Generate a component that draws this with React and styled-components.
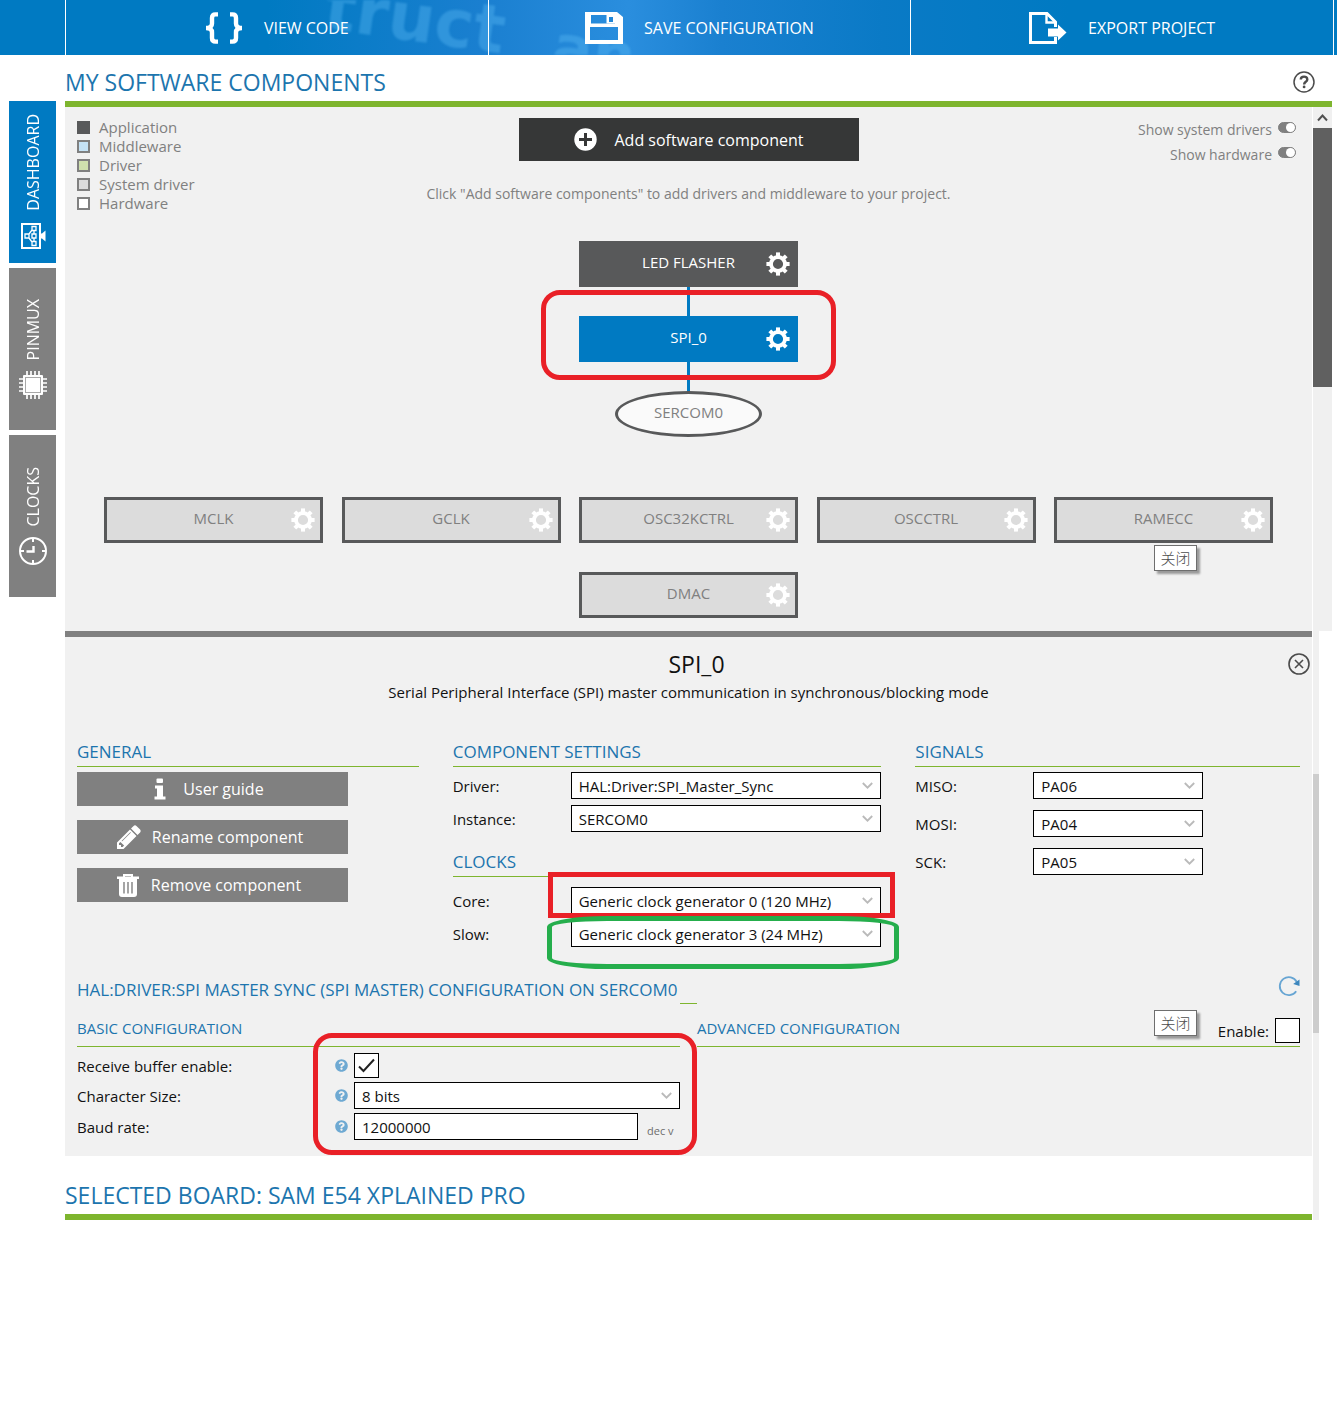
import React from "react";
import styled, { createGlobalStyle, css } from "styled-components";
import { FaQuestionCircle } from "react-icons/fa";

const color = {
  blue: "#007ac2",
  link: "#1c75ae",
  green: "#7eb52e",
  panel: "#f1f1f1",
  grey: "#808080",
  dark: "#58595a",
  red: "#e92027",
  mark: "#25ae4c",
};

const Global = createGlobalStyle`
  * { box-sizing: border-box; }
  body {
    margin: 0;
    background: #fff;
    color: #111;
    font-family: "Open Sans", "Noto Sans CJK SC", sans-serif;
    font-size: 15px;
    line-height: 20px;
  }
  button, input, select { font: inherit; color: inherit; margin: 0; border-radius: 0; }
  button { border: 0; padding: 0; background: none; cursor: pointer; }
  h1, h2, h3, p, ul { margin: 0; padding: 0; font-weight: 400; }
  svg { display: block; flex: none; }
`;

/* ---------- top bar ---------- */

const TopBar = styled.nav`
  position: relative;
  overflow: hidden;
  display: grid;
  grid-template-columns: 65px 1fr 1fr 1fr 4px;
  height: 55px;
  background: linear-gradient(90deg, #007ac2 0, #007ac2 20%, #1a7fd0 36%, #2a8ede 47%, #1a80d0 54%, #0a7ac6 66%, #007ac2 80%);
`;

const Backdrop = styled.svg`
  position: absolute;
  left: 0;
  top: 0;
  filter: blur(1px);
`;

const TopAction = styled.button`
  position: relative;
  display: flex;
  align-items: center;
  justify-content: center;
  gap: ${(p) => p.$gap}px;
  border-left: 1px solid #fff;
  color: #fff;
  font-size: 16px;
`;

const TopEnd = styled.div`
  position: relative;
  border-left: 1px solid #fff;
`;

/* ---------- page frame ---------- */

const Page = styled.div`
  display: grid;
  grid-template-columns: 65px 1fr;
  padding-right: 5px;
`;

const Tabs = styled.nav`
  display: flex;
  flex-direction: column;
  gap: 5px;
  padding: 46px 9px 0;
`;

const Tab = styled.button`
  display: flex;
  flex-direction: column;
  align-items: center;
  justify-content: center;
  gap: 11px;
  height: 162px;
  background: ${(p) => (p.$active ? color.blue : color.grey)};
  color: #fff;
  font-size: 16px;
`;

const TabLabel = styled.span`
  writing-mode: vertical-rl;
  transform: rotate(180deg);
`;

const Main = styled.main`
  min-width: 0;
`;

const SectionHead = styled.header`
  display: flex;
  align-items: center;
  justify-content: space-between;
  height: ${(p) => p.$height}px;
  padding: ${(p) => p.$top}px 17px 0 0;
  border-bottom: 6px solid ${color.green};
`;

const PageTitle = styled.h1`
  color: ${color.link};
  font-size: 23px;
  line-height: 30px;
`;

const IconButton = styled.button`
  display: block;
  justify-self: end;
  align-self: ${(p) => p.$align || "center"};
`;

const ScrollArea = styled.div`
  display: flex;
  margin-right: ${(p) => p.$right || 0}px;
`;

const ScrollBar = styled.div`
  display: flex;
  flex-direction: column;
  align-items: stretch;
  width: ${(p) => p.$width}px;
  margin-left: 1px;
  background: #f0f0f0;
`;

const ScrollArrow = styled.div`
  display: grid;
  place-items: center;
  height: 21px;
`;

const ScrollThumb = styled.div`
  height: 259px;
  margin-top: ${(p) => p.$top || 0}px;
  background: ${(p) => p.$color};
`;

/* ---------- component canvas ---------- */

const Canvas = styled.section`
  flex: 1;
  min-width: 0;
  padding: 11px 12px 13px;
  background: ${color.panel};
  color: ${color.grey};
`;

const CanvasTop = styled.div`
  display: grid;
  grid-template-columns: 1fr 340px 1fr;
  align-items: start;
`;

const Legend = styled.ul`
  list-style: none;
`;

const LegendItem = styled.li`
  display: flex;
  align-items: center;
  gap: 9px;
  line-height: 19px;
`;

const Swatch = styled.span`
  width: 13px;
  height: 13px;
  border: 2px solid ${(p) => (p.$solid ? p.$fill : color.grey)};
  background: ${(p) => p.$fill};
`;

const AddButton = styled.button`
  display: flex;
  align-items: center;
  justify-content: center;
  gap: 18px;
  height: 43px;
  background: #363737;
  color: #fff;
  font-size: 16px;
`;

const Toggles = styled.div`
  display: flex;
  flex-direction: column;
  align-items: flex-end;
  gap: 5px;
  padding: 2px 4px 0 0;
`;

const ToggleLabel = styled.label`
  display: flex;
  gap: 6px;
  font-size: 14px;
`;

const Toggle = styled.input`
  appearance: none;
  display: flex;
  justify-content: flex-end;
  width: 18px;
  height: 11px;
  margin-top: 2px;
  border: 1px solid ${color.grey};
  border-radius: 6px;
  background: ${color.grey};
  &::before {
    content: "";
    width: 9px;
    height: 9px;
    border-radius: 50%;
    background: #fff;
  }
`;

const Hint = styled.p`
  margin-top: -29px;
  text-align: center;
  font-size: 14px;
`;

const Diagram = styled.div`
  display: flex;
  flex-direction: column;
  align-items: center;
  padding-top: 37px;
`;

const nodeKind = {
  application: css`
    background: ${color.dark};
    border-color: ${color.dark};
    color: #fff;
  `,
  selected: css`
    background: ${color.blue};
    border-color: ${color.blue};
    color: #fff;
  `,
  system: css`
    background: #dcdcdc;
    border-color: ${color.dark};
    color: ${color.grey};
  `,
};

const NodeFrame = styled.div`
  position: relative;
  width: 219px;
`;

const NodeButton = styled.button`
  display: grid;
  grid-template-columns: 24px 1fr 24px;
  align-items: center;
  width: 100%;
  height: 46px;
  padding: 0 5px;
  border: 3px solid;
  font-size: 15px;
  ${(p) => nodeKind[p.$kind]}
`;

const NodeName = styled.span`
  grid-column: 2;
  padding-bottom: 5px;
`;

const Link = styled.div`
  width: 3px;
  height: 29px;
  background: ${color.blue};
`;

const Peripheral = styled.button`
  width: 147px;
  height: 46px;
  padding-bottom: 5px;
  border: 3px solid ${color.dark};
  border-radius: 50%;
  background: #fafafa;
  color: ${color.grey};
`;

const NodeRow = styled.div`
  display: flex;
  justify-content: space-between;
  width: 100%;
  margin: 60px 0 29px;
  padding: 0 27px;
`;

const Mark = styled.span`
  position: absolute;
  z-index: 2;
  inset: ${(p) => p.$inset};
  border: 5px solid ${(p) => p.$color || color.red};
  border-radius: ${(p) => p.$radius || "0"};
  pointer-events: none;
`;

const Tooltip = styled.span`
  position: absolute;
  top: ${(p) => p.$top}px;
  right: ${(p) => p.$right}px;
  width: 43px;
  height: 26px;
  border: 1px solid #6e6e6e;
  background: #fff;
  box-shadow: 3px 3px 2px #9a9a9a;
  color: #4c4c4c;
  font-family: "Noto Sans CJK SC", sans-serif;
  font-weight: 300;
  line-height: 23px;
  text-align: center;
`;

/* ---------- settings panel ---------- */

const Lower = styled.div`
  flex: 1;
  min-width: 0;
`;

const Settings = styled.section`
  padding: 12px 12px 16px;
  border-top: 6px solid ${color.grey};
  background: ${color.panel};
`;

const SettingsHead = styled.div`
  display: grid;
  grid-template-columns: 1fr auto 1fr;
  align-items: center;
  margin: 0 -10px 0 6px;
`;

const SettingsTitle = styled.h2`
  grid-column: 2;
  font-size: 23px;
  line-height: 30px;
`;

const Description = styled.p`
  margin: 3px 0 36px;
  text-align: center;
`;

const Columns = styled.div`
  display: grid;
  grid-template-columns: 342fr 429fr 385fr;
  gap: 34px;
`;

const GroupTitle = styled.h3`
  margin-bottom: ${(p) => p.$after}px;
  border-bottom: 1px solid ${color.green};
  color: ${color.link};
  font-size: 17px;
  line-height: 28px;
`;

const Group = styled.div`
  & + & {
    margin-top: 16px;
  }
`;

const Stack = styled.div`
  display: flex;
  flex-direction: column;
  gap: ${(p) => p.$gap}px;
`;

const ActionButton = styled.button`
  display: flex;
  align-items: center;
  justify-content: center;
  gap: ${(p) => p.$gap}px;
  width: 271px;
  height: 34px;
  padding-right: 7px;
  background: ${color.grey};
  color: #fff;
  font-size: 16px;
`;

const Field = styled.div`
  display: grid;
  grid-template-columns: 118px ${(p) => p.$control || "1fr"};
  align-items: center;
`;

const SelectFrame = styled.div`
  position: relative;
`;

const SelectBox = styled.select`
  appearance: none;
  display: block;
  width: 100%;
  height: 27px;
  padding: 0 24px 0 7px;
  border: 1px solid #000;
  background: #fff;
`;

const Chevron = styled.svg`
  position: absolute;
  top: 10px;
  right: 8px;
  pointer-events: none;
`;

const ConfigHead = styled.div`
  display: grid;
  grid-template-columns: 1fr 17px 1fr;
  align-items: center;
  margin: 28px 0 6px;
`;

const ConfigTitle = styled.h3`
  color: ${color.link};
  font-size: 17px;
  line-height: 29px;
  white-space: nowrap;
`;

const Rule = styled.span`
  align-self: stretch;
  border-bottom: 1px solid ${color.green};
`;

const ConfigColumns = styled.div`
  display: grid;
  grid-template-columns: 1fr 1fr;
  gap: 17px;
`;

const ConfigGroup = styled.div`
  position: relative;
`;

const SubTitle = styled.div`
  display: flex;
  align-items: center;
  justify-content: space-between;
  height: 37px;
  margin-bottom: 6px;
  border-bottom: 1px solid ${color.green};
  color: ${color.link};
`;

const SubHeading = styled.h3`
  font-size: 15px;
`;

const EnableLabel = styled.label`
  display: flex;
  align-self: flex-end;
  align-items: center;
  gap: 6px;
  margin-bottom: 3px;
  color: #111;
`;

const CheckFrame = styled.span`
  position: relative;
  display: block;
  width: 25px;
  height: 25px;
`;

const CheckBox = styled.input`
  appearance: none;
  display: block;
  width: 25px;
  height: 25px;
  border: 1px solid #000;
  background: #fff;
  &:not(:checked) + svg {
    display: none;
  }
`;

const Tick = styled.svg`
  position: absolute;
  inset: 3px;
  pointer-events: none;
`;

const ConfigRow = styled.div`
  display: grid;
  grid-template-columns: 258px 19px 1fr;
  align-items: center;
`;

const HelpDot = styled(FaQuestionCircle)`
  width: 13px;
  height: 13px;
  color: #6ea9d2;
`;

const BaudField = styled.div`
  display: flex;
  align-items: flex-end;
`;

const TextBox = styled.input`
  flex: 1;
  min-width: 0;
  height: 27px;
  padding: 0 7px;
  border: 1px solid #000;
  background: #fff;
`;

const RadixButton = styled.button`
  width: 42px;
  padding-left: 9px;
  color: #6c6c6c;
  font-size: 11px;
  line-height: 18px;
  text-align: left;
`;

/* ---------- drawings ---------- */

const BracesIcon = () => (
  <svg width="38" height="32" viewBox="0 0 38 32" fill="none" stroke="#fff" strokeWidth="4.4" aria-hidden="true">
    <path d="M13 2.400h-2.500Q7 2.400 7 6v5.500Q7 16 1 16Q7 16 7 20.500V26Q7 29.600 10.500 29.600H13" />
    <path d="M25 2.400h2.500Q31 2.400 31 6v5.500Q31 16 37 16Q31 16 31 20.500V26Q31 29.600 27.500 29.600H25" />
  </svg>
);

const SaveIcon = () => (
  <svg width="38" height="32" viewBox="0 0 38 32" aria-hidden="true">
    <path
      fill="#fff"
      fillRule="evenodd"
      d="M0 0h32l6 5v27H0zM6 3v8.500h24V3zM5 15v13h28V15z"
    />
    <path fill="#fff" d="M21.500 3h9v8.500h-9z" />
    <path fill="#2386d6" d="M24 5h4v5h-4z" />
  </svg>
);

const ExportIcon = () => (
  <svg width="38" height="32" viewBox="0 0 38 32" fill="none" aria-hidden="true">
    <path stroke="#fff" strokeWidth="3" d="M26.500 15V10L18 1.500H1.500v29h25V25" />
    <path stroke="#fff" strokeWidth="2.400" d="M17.500 2v8.500h9" />
    <path fill="#fff" d="M19 16.500h10v-4l8.500 8-8.500 8v-4H19z" />
  </svg>
);

const HelpIcon = () => (
  <svg width="22" height="22" viewBox="0 0 22 22" fill="none" aria-hidden="true">
    <circle cx="11" cy="11" r="10" stroke="#4b4b4b" strokeWidth="1.500" />
    <path stroke="#4b4b4b" strokeWidth="2.400" d="M7.800 8.600C7.800 4.700 14.300 4.700 14.300 8.400C14.300 10.800 11.100 10.800 11.100 13.400" />
    <circle cx="11.100" cy="15.900" r="1.400" fill="#4b4b4b" />
  </svg>
);

const CloseIcon = () => (
  <svg width="22" height="22" viewBox="0 0 22 22" fill="none" stroke="#4b4b4b" aria-hidden="true">
    <circle cx="11" cy="11" r="10" strokeWidth="1.600" />
    <path strokeWidth="1.600" d="M7 7l8 8M15 7l-8 8" />
  </svg>
);

const PlusIcon = () => (
  <svg width="23" height="23" viewBox="0 0 23 23" aria-hidden="true">
    <circle cx="11.500" cy="11.500" r="11.200" fill="#fff" />
    <path stroke="#363737" strokeWidth="3" d="M11.500 5v13M5 11.500h13" />
  </svg>
);

const GearIcon = () => (
  <svg width="24" height="24" viewBox="0 0 24 24" fill="none" stroke="#fff" aria-hidden="true">
    <circle cx="12" cy="12" r="7" strokeWidth="3.800" />
    {[0, 45, 90, 135, 180, 225, 270, 315].map((angle) => (
      <path key={angle} d="M12 4.500V0.400" strokeWidth="4" transform={`rotate(${angle} 12 12)`} />
    ))}
  </svg>
);

const DashboardIcon = () => (
  <svg width="26" height="28" viewBox="0 0 26 28" fill="none" stroke="#fff" aria-hidden="true">
    <rect x="2" y="2" width="18" height="24" strokeWidth="2" />
    <path
      strokeWidth="1.300"
      d="M12 4.500h4v4h-4zM12 12h4v4h-4zM12 19.500h4v4h-4zM5 12h4v4H5zM14 8.500V12M14 16v3.500M9 12l3-4M9 16l3 4"
    />
    <path fill="#fff" stroke="none" d="M20 11.500h2l3.500-3v11l-3.500-3h-2z" />
  </svg>
);

const ChipIcon = () => (
  <svg width="28" height="28" viewBox="0 0 28 28" aria-hidden="true">
    <path stroke="#fff" strokeWidth="1.700" d="M8 0v28M12 0v28M16 0v28M20 0v28M0 8h28M0 12h28M0 16h28M0 20h28" />
    <rect x="4" y="4" width="20" height="20" rx="1" fill="#fff" />
    <rect x="6.500" y="6.500" width="15" height="15" fill="none" stroke="#a8a8a8" />
  </svg>
);

const ClockIcon = () => (
  <svg width="28" height="28" viewBox="0 0 28 28" fill="none" stroke="#fff" aria-hidden="true">
    <circle cx="14" cy="14" r="13" strokeWidth="2" />
    <path strokeWidth="2" d="M14 1v4M14 23v4M1 14h4M23 14h4" />
    <path strokeWidth="2.400" d="M7.500 14.500h7V9" />
  </svg>
);

const InfoIcon = () => (
  <svg width="12" height="22" viewBox="0 0 12 22" fill="#fff" aria-hidden="true">
    <rect x="2.500" y="0.500" width="6.500" height="4.500" rx="1" />
    <path d="M1 7.500h8v11h2.500V21.500H0.500V18.500H3V10.500H1z" />
  </svg>
);

const PencilIcon = () => (
  <svg width="28" height="28" viewBox="0 0 1792 1792" fill="#fff" aria-hidden="true">
    <path d="M491 1536l91-91-235-235-91 91v107h128v128h107zm523-928q0-22-22-22-10 0-17 7l-542 542q-7 7-7 17 0 22 22 22 10 0 17-7l542-542q7-7 7-17zm-54-192l416 416-832 832h-416v-416zm683 96q0 53-37 90l-166 166-416-416 166-165q36-38 90-38 53 0 91 38l235 234q37 39 37 91z" />
  </svg>
);

const TrashIcon = () => (
  <svg width="22" height="24" viewBox="0 0 22 24" fill="none" aria-hidden="true">
    <path stroke="#fff" strokeWidth="2" d="M7 4V2h8v2" />
    <path fill="#fff" d="M0 3.500h22V6H0zM2 6h18v15q0 3-3 3H5q-3 0-3-3z" />
    <path stroke="#808080" strokeWidth="1.400" d="M7 9v11.500M11 9v11.500M15 9v11.500" />
  </svg>
);

const RefreshIcon = () => (
  <svg width="22" height="22" viewBox="0 0 22 22" fill="none" aria-hidden="true">
    <path stroke="#67a5d3" strokeWidth="1.800" d="M18.200 16.200A9 9 0 1 1 18.800 7" />
    <path fill="#3c86bd" d="M21.500 4.500v6.500l-6.300-2z" />
  </svg>
);

/* ---------- parts ---------- */

function Select({ id, value, children }) {
  return (
    <SelectFrame>
      <SelectBox id={id} defaultValue={value}>
        <option>{value}</option>
      </SelectBox>
      <Chevron width="11" height="7" viewBox="0 0 11 7" fill="none" stroke="#bababa" strokeWidth="1.800">
        <path d="M0.800 1l4.700 4.700L10.200 1" />
      </Chevron>
      {children}
    </SelectFrame>
  );
}

function LabelledSelect({ id, label, value, control, children }) {
  return (
    <Field $control={control}>
      <label htmlFor={id}>{label}</label>
      <Select id={id} value={value}>
        {children}
      </Select>
    </Field>
  );
}

function Node({ name, kind, children }) {
  return (
    <NodeFrame>
      <NodeButton $kind={kind}>
        <NodeName>{name}</NodeName>
        <GearIcon />
      </NodeButton>
      {children}
    </NodeFrame>
  );
}

const legend = [
  { name: "Application", fill: color.dark, solid: true },
  { name: "Middleware", fill: "#c5e3f6" },
  { name: "Driver", fill: "#cfe0ae" },
  { name: "System driver", fill: "#dcdcdc" },
  { name: "Hardware", fill: "#ffffff" },
];

export default function App() {
  return (
    <>
      <Global />
      <TopBar>
        <Backdrop width="900" height="55" viewBox="0 0 900 55" aria-hidden="true">
          <g fill="#55b4f0" fillOpacity="0.42" fontFamily="DejaVu Sans" fontWeight="700">
            <text x="322" y="28" fontSize="66" transform="rotate(8 322 28)">truct</text>
            <text x="550" y="66" fontSize="60" transform="rotate(8 550 66)">an</text>
          </g>
        </Backdrop>
        <div />
        <TopAction $gap={21}><BracesIcon />VIEW CODE</TopAction>
        <TopAction $gap={21}><SaveIcon />SAVE CONFIGURATION</TopAction>
        <TopAction $gap={21}><ExportIcon />EXPORT PROJECT</TopAction>
        <TopEnd />
      </TopBar>

      <Page>
        <Tabs>
          <Tab $active><TabLabel>DASHBOARD</TabLabel><DashboardIcon /></Tab>
          <Tab><TabLabel>PINMUX</TabLabel><ChipIcon /></Tab>
          <Tab><TabLabel>CLOCKS</TabLabel><ClockIcon /></Tab>
        </Tabs>

        <Main>
          <SectionHead $height={52} $top={8}>
            <PageTitle>MY SOFTWARE COMPONENTS</PageTitle>
            <IconButton aria-label="Help"><HelpIcon /></IconButton>
          </SectionHead>

          <ScrollArea>
            <Canvas>
              <CanvasTop>
                <Legend>
                  {legend.map((item) => (
                    <LegendItem key={item.name}>
                      <Swatch $fill={item.fill} $solid={item.solid} />
                      {item.name}
                    </LegendItem>
                  ))}
                </Legend>
                <AddButton><PlusIcon />Add software component</AddButton>
                <Toggles>
                  <ToggleLabel>Show system drivers<Toggle type="checkbox" role="switch" defaultChecked /></ToggleLabel>
                  <ToggleLabel>Show hardware<Toggle type="checkbox" role="switch" defaultChecked /></ToggleLabel>
                </Toggles>
              </CanvasTop>
              <Hint>Click "Add software components" to add drivers and middleware to your project.</Hint>

              <Diagram>
                <Node name="LED FLASHER" kind="application" />
                <Link />
                <Node name="SPI_0" kind="selected">
                  <Mark $inset="-26px -38px -18px -38px" $radius="19px" />
                </Node>
                <Link />
                <Peripheral>SERCOM0</Peripheral>
                <NodeRow>
                  <Node name="MCLK" kind="system" />
                  <Node name="GCLK" kind="system" />
                  <Node name="OSC32KCTRL" kind="system" />
                  <Node name="OSCCTRL" kind="system" />
                  <Node name="RAMECC" kind="system">
                    <Tooltip $top={48} $right={76}>关闭</Tooltip>
                  </Node>
                </NodeRow>
                <Node name="DMAC" kind="system" />
              </Diagram>
            </Canvas>
            <ScrollBar $width={19}>
              <ScrollArrow>
                <svg width="11" height="8" viewBox="0 0 11 8" fill="none" stroke="#505050" strokeWidth="2">
                  <path d="M1 6.500l4.500-5 4.500 5" />
                </svg>
              </ScrollArrow>
              <ScrollThumb $color="#606060" />
            </ScrollBar>
          </ScrollArea>

          <ScrollArea $right={13}>
            <Lower>
              <Settings>
                <SettingsHead>
                  <SettingsTitle>SPI_0</SettingsTitle>
                  <IconButton aria-label="Close"><CloseIcon /></IconButton>
                </SettingsHead>
                <Description>
                  Serial Peripheral Interface (SPI) master communication in synchronous/blocking mode
                </Description>

                <Columns>
                  <Group>
                    <GroupTitle $after={5}>GENERAL</GroupTitle>
                    <Stack $gap={14}>
                      <ActionButton $gap={17}><InfoIcon />User guide</ActionButton>
                      <ActionButton $gap={9}><PencilIcon />Rename component</ActionButton>
                      <ActionButton $gap={12}><TrashIcon />Remove component</ActionButton>
                    </Stack>
                  </Group>

                  <div>
                    <Group>
                      <GroupTitle $after={5}>COMPONENT SETTINGS</GroupTitle>
                      <Stack $gap={6}>
                        <LabelledSelect id="driver" label="Driver:" value="HAL:Driver:SPI_Master_Sync" />
                        <LabelledSelect id="instance" label="Instance:" value="SERCOM0" />
                      </Stack>
                    </Group>
                    <Group>
                      <GroupTitle $after={10}>CLOCKS</GroupTitle>
                      <Stack $gap={6}>
                        <LabelledSelect id="core" label="Core:" value="Generic clock generator 0 (120 MHz)">
                          <Mark $inset="-15px -14px -4px -23px" />
                        </LabelledSelect>
                        <LabelledSelect id="slow" label="Slow:" value="Generic clock generator 3 (24 MHz)">
                          <Mark $inset="-4px -18px -22px -24px" $color={color.mark} $radius="60px / 11px" />
                        </LabelledSelect>
                      </Stack>
                    </Group>
                  </div>

                  <Group>
                    <GroupTitle $after={5}>SIGNALS</GroupTitle>
                    <Stack $gap={11}>
                      <LabelledSelect id="miso" label="MISO:" value="PA06" control="170px" />
                      <LabelledSelect id="mosi" label="MOSI:" value="PA04" control="170px" />
                      <LabelledSelect id="sck" label="SCK:" value="PA05" control="170px" />
                    </Stack>
                  </Group>
                </Columns>

                <ConfigHead>
                  <ConfigTitle>HAL:DRIVER:SPI MASTER SYNC (SPI MASTER) CONFIGURATION ON SERCOM0</ConfigTitle>
                  <Rule />
                  <IconButton $align="start" aria-label="Reset configuration"><RefreshIcon /></IconButton>
                </ConfigHead>

                <ConfigColumns>
                  <ConfigGroup>
                    <SubTitle><SubHeading>BASIC CONFIGURATION</SubHeading></SubTitle>
                    <Stack $gap={4}>
                      <ConfigRow>
                        <label htmlFor="rx-buffer">Receive buffer enable:</label>
                        <HelpDot />
                        <CheckFrame>
                          <CheckBox id="rx-buffer" type="checkbox" defaultChecked />
                          <Tick width="19" height="19" viewBox="0 0 19 19" fill="none" stroke="#222" strokeWidth="2">
                            <path d="M2 10.500l4.500 4.500L17 3.500" />
                          </Tick>
                        </CheckFrame>
                      </ConfigRow>
                      <ConfigRow>
                        <label htmlFor="char-size">Character Size:</label>
                        <HelpDot />
                        <Select id="char-size" value="8 bits" />
                      </ConfigRow>
                      <ConfigRow>
                        <label htmlFor="baud">Baud rate:</label>
                        <HelpDot />
                        <BaudField>
                          <TextBox id="baud" type="text" defaultValue="12000000" />
                          <RadixButton>dec v</RadixButton>
                        </BaudField>
                      </ConfigRow>
                    </Stack>
                    <Mark $inset="23px -17px -15px 236px" $radius="19px" />
                  </ConfigGroup>

                  <ConfigGroup>
                    <SubTitle>
                      <SubHeading>ADVANCED CONFIGURATION</SubHeading>
                      <EnableLabel>
                        Enable:
                        <CheckFrame><CheckBox type="checkbox" /></CheckFrame>
                      </EnableLabel>
                    </SubTitle>
                    <Tooltip $top={0} $right={103}>关闭</Tooltip>
                  </ConfigGroup>
                </ConfigColumns>
              </Settings>

              <SectionHead $height={64} $top={20}>
                <PageTitle>SELECTED BOARD: SAM E54 XPLAINED PRO</PageTitle>
              </SectionHead>
            </Lower>
            <ScrollBar $width={6}>
              <ScrollThumb $top={143} $color="#cdcdcd" />
            </ScrollBar>
          </ScrollArea>
        </Main>
      </Page>
    </>
  );
}
